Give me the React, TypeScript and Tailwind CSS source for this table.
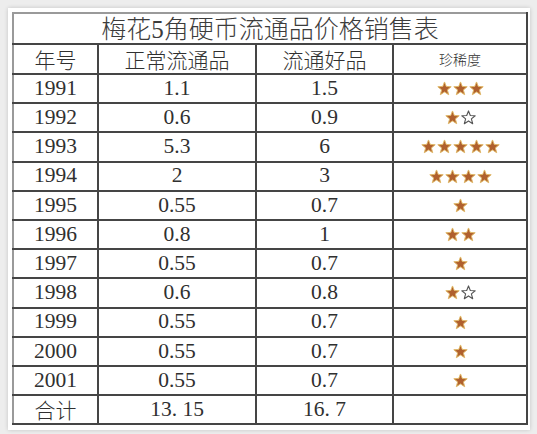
import * as React from "react";

type Row = { year: string; normal: string; good: string; full: number; empty: number };

const ROWS: Row[] = [
  { year: "1991", normal: "1.1", good: "1.5", full: 3, empty: 0 },
  { year: "1992", normal: "0.6", good: "0.9", full: 1, empty: 1 },
  { year: "1993", normal: "5.3", good: "6", full: 5, empty: 0 },
  { year: "1994", normal: "2", good: "3", full: 4, empty: 0 },
  { year: "1995", normal: "0.55", good: "0.7", full: 1, empty: 0 },
  { year: "1996", normal: "0.8", good: "1", full: 2, empty: 0 },
  { year: "1997", normal: "0.55", good: "0.7", full: 1, empty: 0 },
  { year: "1998", normal: "0.6", good: "0.8", full: 1, empty: 1 },
  { year: "1999", normal: "0.55", good: "0.7", full: 1, empty: 0 },
  { year: "2000", normal: "0.55", good: "0.7", full: 1, empty: 0 },
  { year: "2001", normal: "0.55", good: "0.7", full: 1, empty: 0 },
];

const SERIF = "font-['Liberation_Serif','Noto_Sans_CJK_SC',serif]";
const CJK = "font-['Noto_Sans_CJK_SC',sans-serif] font-light";

function Star({ filled }: { filled: boolean }) {
  return (
    <svg width="15" height="15" viewBox="0 0 24 24" aria-hidden="true">
      <polygon
        points="12,1.5 14.9,8.8 22.7,9.2 16.6,14.2 18.7,21.9 12,17.5 5.3,21.9 7.4,14.2 1.3,9.2 9.1,8.8"
        fill={filled ? "#b0602e" : "#ffffff"}
        stroke={filled ? "#e0b868" : "#555555"}
        strokeWidth={filled ? 1.6 : 1.8}
        strokeLinejoin="round"
      />
    </svg>
  );
}

function Stars({ full, empty }: { full: number; empty: number }) {
  return (
    <div className="flex items-center justify-center gap-[1px]">
      {Array.from({ length: full }).map((_, i) => (
        <Star key={`f${i}`} filled />
      ))}
      {Array.from({ length: empty }).map((_, i) => (
        <Star key={`e${i}`} filled={false} />
      ))}
    </div>
  );
}

const cell = "border-2 border-[#454545] text-center p-0";
const num = `${cell} text-[21.5px] leading-none ${SERIF}`;

export default function App() {
  return (
    <div className="w-[537px] h-[434px] bg-[#ededed] pt-[8px] pl-[8px]">
      <div className="w-[522px] h-[422px] bg-white shadow-[0_0_4px_rgba(0,0,0,0.18)] pt-[4px] pl-[4px]">
        <table className="border-collapse table-fixed text-[#303030]">
          <colgroup>
            <col className="w-[85px]" />
            <col className="w-[158px]" />
            <col className="w-[137px]" />
            <col className="w-[134px]" />
          </colgroup>
          <tbody>
            <tr className="h-[31px]">
              <td
                colSpan={4}
                className={`${cell} border-t-[#9a9a9a] border-l-[#9a9a9a] text-[25px] leading-none text-[#3c3c3c] ${CJK}`}
              >
                梅花<span className={SERIF}>5</span>角硬币流通品价格销售表
              </td>
            </tr>
            <tr className="h-[30px]">
              <td className={`${cell} border-l-[#9a9a9a] text-[21px] leading-none ${CJK}`}>年号</td>
              <td className={`${cell} text-[21px] leading-none ${CJK}`}>正常流通品</td>
              <td className={`${cell} text-[21px] leading-none ${CJK}`}>流通好品</td>
              <td className={`${cell} text-[14px] leading-none ${CJK}`}>珍稀度</td>
            </tr>
            {ROWS.map((r) => (
              <tr key={r.year} className="h-[29.2px]">
                <td className={`${num} border-l-[#9a9a9a]`}>{r.year}</td>
                <td className={num}>{r.normal}</td>
                <td className={num}>{r.good}</td>
                <td className={cell}>
                  <Stars full={r.full} empty={r.empty} />
                </td>
              </tr>
            ))}
            <tr className="h-[29px]">
              <td className={`${cell} border-l-[#9a9a9a] text-[21px] leading-none ${CJK}`}>合计</td>
              <td className={num}>13. 15</td>
              <td className={num}>16. 7</td>
              <td className={cell}></td>
            </tr>
          </tbody>
        </table>
      </div>
    </div>
  );
}
